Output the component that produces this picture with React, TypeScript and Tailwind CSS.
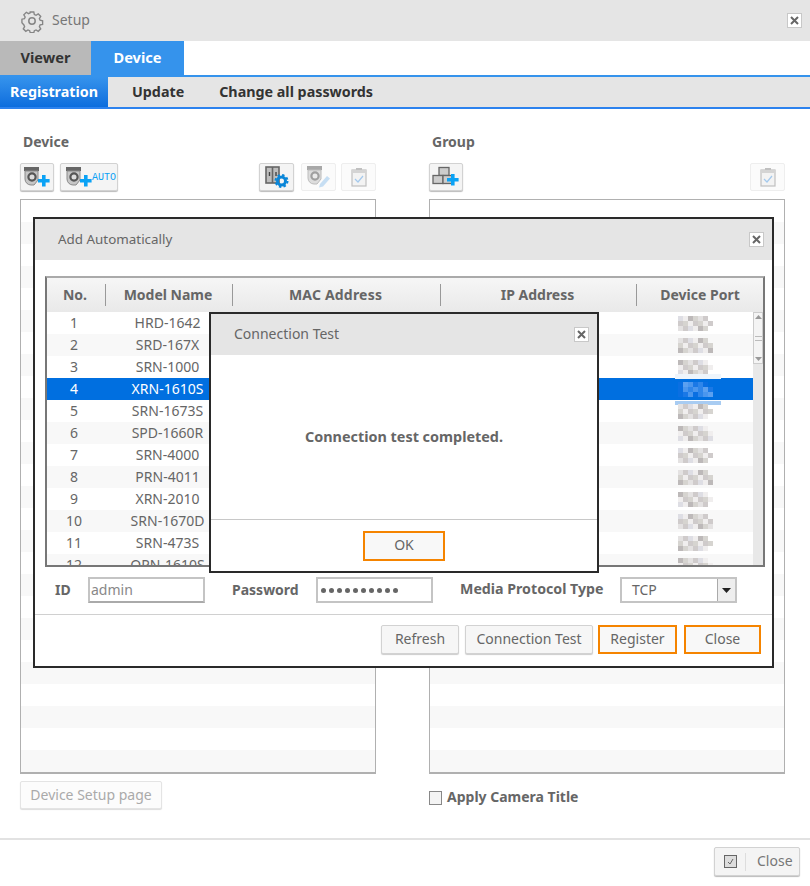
import { ReactNode } from "react";

const devices = [
  ["1", "HRD-1642"],
  ["2", "SRD-167X"],
  ["3", "SRN-1000"],
  ["4", "XRN-1610S"],
  ["5", "SRN-1673S"],
  ["6", "SPD-1660R"],
  ["7", "SRN-4000"],
  ["8", "PRN-4011"],
  ["9", "XRN-2010"],
  ["10", "SRN-1670D"],
  ["11", "SRN-473S"],
  ["12", "QPN-1610S"],
];

const backRows = Array.from({ length: 26 }, (_, i) => i);

// pixel mosaic standing in for the blurred port numbers
function Mosaic({ seed, selected }: { seed: number; selected: boolean }) {
  const shades = selected
    ? ["#2f86ea", "#5ba0f0", "#1a78e6", "#0a6fe2", "#4a96ee"]
    : ["#e4e2e2", "#cfcbcb", "#dedee4", "#f0eeee", "#bdb9b9", "#d6d4d0"];
  const cells = [];
  for (let y = 0; y < 3; y++) {
    for (let x = 0; x < 7; x++) {
      const n = (seed * 7 + x * 13 + y * 5 + ((x * y + seed) % 4) * 3) % shades.length;
      const empty = (y === 0 && x === 6) || (y === 2 && x === 6 && seed % 2 === 0);
      if (!empty) cells.push(<rect key={`${x}-${y}`} x={x * 5} y={y * 5} width="5" height="5" fill={shades[n]} />);
    }
  }
  return (
    <svg width="35" height="15" className="block overflow-visible">
      {selected && <rect x="-3" y="-8" width="46" height="5" fill="#eef5fc" />}
      {selected && <rect x="-3" y="19" width="46" height="4" fill="#a8ccf2" />}
      {cells}
    </svg>
  );
}

function IconButton({ children, className, disabled }: { children: ReactNode; className: string; disabled?: boolean }) {
  return (
    <div
      className={`flex h-[28px] items-center justify-center rounded-[2px] border shadow-[0_1px_1px_#bbb] ${
        disabled ? "border-[#eee] bg-[#fbfbfb] shadow-none" : "border-[#d2d2d2] bg-[#f4f4f4]"
      } ${className}`}
    >
      {children}
    </div>
  );
}

function Plus({ x, y }: { x: number; y: number }) {
  return <path d={`M${x + 4} ${y}h3.6v4h4v3.6h-4v4h-3.6v-4h-4v-3.6h4z`} fill="#0aa2f5" />;
}

function CamBody() {
  return (
    <>
      <rect x="0" y="0" width="15" height="4" fill="#666" />
      <path d="M1 4h13v9l-4 5h-3a6 6 0 0 1-6-6z" fill="#c6c6c6" stroke="#8a8a8a" strokeWidth="1" />
      <circle cx="8" cy="10" r="3.6" fill="#ddd" stroke="#555" strokeWidth="2.2" />
    </>
  );
}

function CamAdd() {
  return (
    <svg width="26" height="20" viewBox="0 0 26 20">
      <CamBody />
      <Plus x={14} y={8} />
    </svg>
  );
}

function BlockSettings() {
  return (
    <svg width="24" height="22" viewBox="0 0 24 22">
      <rect x="1" y="1" width="13" height="16" fill="#bdbdbd" stroke="#666" strokeWidth="1.6" />
      <path d="M7.5 1v16" stroke="#666" strokeWidth="1.6" />
      <path d="M4.5 6v4M11 6v4" stroke="#444" strokeWidth="1.4" />
      <circle cx="16.5" cy="15" r="4" fill="none" stroke="#0a86d8" strokeWidth="3" />
      <circle cx="16.5" cy="15" r="6" fill="none" stroke="#0a86d8" strokeWidth="2" strokeDasharray="2.4 2.3" />
    </svg>
  );
}

function CamEdit() {
  return (
    <svg width="24" height="22" viewBox="0 0 24 22" opacity="0.55">
      <CamBody />
      <path d="M13 18l7-8l3 2.5l-7 8l-4 1z" fill="#9cc8ee" />
    </svg>
  );
}

function Clipboard() {
  return (
    <svg width="16" height="20" viewBox="0 0 16 20" opacity="0.6">
      <rect x="1" y="3" width="14" height="16" fill="#eee" stroke="#999" strokeWidth="1.2" />
      <rect x="1" y="3" width="14" height="3" fill="#bbb" />
      <rect x="5" y="1" width="6" height="2" fill="#999" />
      <path d="M4 12l3 3l5-6" fill="none" stroke="#6aa8e4" strokeWidth="1.2" />
    </svg>
  );
}

function GroupAdd() {
  return (
    <svg width="28" height="22" viewBox="0 0 28 22">
      <rect x="7" y="1.5" width="10" height="8" fill="#ccc" stroke="#666" strokeWidth="1.3" />
      <rect x="1" y="9.5" width="10" height="8" fill="#ccc" stroke="#666" strokeWidth="1.3" />
      <rect x="11" y="9.5" width="10" height="8" fill="#ccc" stroke="#666" strokeWidth="1.3" />
      <Plus x={15} y={8} />
    </svg>
  );
}

function CloseBox() {
  return (
    <div className="flex h-[15px] w-[15px] items-center justify-center border border-[#c8c8c8] bg-white">
      <svg width="9" height="9" viewBox="0 0 9 9">
        <path d="M1 1l7 7M8 1l-7 7" stroke="#666" strokeWidth="2" />
      </svg>
    </div>
  );
}

function Gear() {
  return (
    <svg width="24" height="24" viewBox="0 0 24 24" fill="none" stroke="#858585" strokeWidth="1.5">
      <path d="M10 2h4l.6 2.8 1.9.8 2.4-1.5 2.8 2.8-1.5 2.4.8 1.9 2.8.6v4l-2.8.6-.8 1.9 1.5 2.4-2.8 2.8-2.4-1.5-1.9.8-.6 2.2h-4l-.6-2.2-1.9-.8-2.4 1.5-2.8-2.8 1.5-2.4-.8-1.9L.8 14v-4l2.8-.6.8-1.9-1.5-2.4 2.8-2.8 2.4 1.5 1.9-.8z" transform="translate(1.2 1.2) scale(0.9)" />
      <circle cx="12" cy="12" r="3.2" />
    </svg>
  );
}

function ModalButton({ label, className, orange }: { label: string; className: string; orange?: boolean }) {
  return (
    <div
      className={`flex h-[29px] items-center justify-center pb-[2px] text-[14px] text-[#666] ${
        orange ? "border-2 border-[#f58400] bg-[#f8f8f8]" : "rounded-[2px] border border-[#d2d2d2] bg-[#f6f6f6] shadow-[0_1px_1px_#ccc]"
      } ${className}`}
    >
      {label}
    </div>
  );
}

function BackPanel() {
  return (
    <div className="h-[575px] overflow-hidden border border-b-2 border-[#b0b0b0] bg-white">
      {backRows.map((i) => (
        <div key={i} className={`h-[22px] ${i % 2 === 1 ? "bg-[#f8f8f8]" : "bg-white"}`} />
      ))}
    </div>
  );
}

function AddAutomatically() {
  return (
    <div className="absolute left-[33px] top-[217px] flex h-[451px] w-[741px] flex-col border-2 border-[#2a2a2a] bg-white">
      <div className="flex h-[41px] shrink-0 items-center justify-between bg-[#e5e5e5] pl-[23px] pr-[8px]">
        <span className="text-[13.4px] text-[#666]">Add Automatically</span>
        <CloseBox />
      </div>
      <div className="ml-[10px] mt-[16px] flex h-[291px] w-[720px] flex-col overflow-hidden border-2 border-[#777] border-t-[#aaa]">
        <div className="flex h-[34px] shrink-0 items-center bg-gradient-to-b from-[#f6f6f6] to-[#e9e9e9] text-[14px] font-bold text-[#666]">
          <div className="w-[56px] pb-[2px] text-center">No.</div>
          <div className="ml-[2px] h-[22px] w-px bg-[#999]" />
          <div className="w-[124px] pb-[2px] text-center">Model Name</div>
          <div className="ml-[2px] h-[22px] w-px bg-[#999]" />
          <div className="w-[205px] pb-[2px] text-center tracking-[0.2px]">MAC Address</div>
          <div className="ml-[2px] h-[22px] w-px bg-[#999]" />
          <div className="w-[193px] pb-[2px] text-center">IP Address</div>
          <div className="ml-[2px] h-[22px] w-px bg-[#999]" />
          <div className="flex-1 pb-[2px] text-center">Device Port</div>
        </div>
        <div className="flex min-h-0 flex-1 overflow-hidden">
          <div className="min-w-0 flex-1">
            {devices.map(([no, model], i) => {
              const selected = i === 3;
              return (
                <div
                  key={no}
                  className={`flex h-[22px] items-center text-[14px] ${
                    selected ? "bg-[#006fe0] text-white" : i % 2 === 1 ? "bg-[#f8f8f8] text-[#666]" : "bg-white text-[#666]"
                  }`}
                >
                  <div className="w-[54px] pb-[2px] text-center">{no}</div>
                  <div className="ml-[1px] w-[131px] pb-[2px] text-center">{model}</div>
                  <div className="w-[404px]" />
                  <div className="relative ml-[41px]">
                    <Mosaic seed={i + 2} selected={selected} />
                  </div>
                </div>
              );
            })}
          </div>
          <div className="flex w-[10px] shrink-0 flex-col bg-[#e8e8e8]">
            <div className="flex h-[52px] flex-col items-center justify-between border border-[#ccc] bg-[#f4f4f4] py-[2px]">
              <svg width="7" height="4" viewBox="0 0 7 4"><path d="M3.5 0l3.5 4h-7z" fill="#999" /></svg>
              <div className="h-[5px] w-[7px] border-y border-[#bbb]" />
              <svg width="7" height="4" viewBox="0 0 7 4"><path d="M3.5 4l3.5-4h-7z" fill="#999" /></svg>
            </div>
          </div>
        </div>
      </div>
      <div className="mt-[10px] flex h-[26px] items-center text-[14px] text-[#666]">
        <span className="ml-[20px] w-[33px] pb-[2px] font-bold">ID</span>
        <div className="flex h-[26px] w-[117px] items-center border-2 border-[#c4c4c4] border-b-[#aaa] pb-[2px] pl-[1px] text-[#888]">admin</div>
        <span className="ml-[27px] w-[84px] pb-[2px] font-bold">Password</span>
        <div className="flex h-[26px] w-[117px] items-center gap-[3px] border-2 border-[#c4c4c4] pl-[3px]">
          {Array.from({ length: 10 }, (_, i) => (
            <span key={i} className="h-[5px] w-[5px] rounded-full bg-[#666]" />
          ))}
        </div>
        <span className="ml-[27px] w-[160px] pb-[2px] text-[14.2px] font-bold">Media Protocol Type</span>
        <div className="flex h-[26px] w-[117px] border-2 border-[#c4c4c4]">
          <div className="flex flex-1 items-center pb-[2px] pl-[10px]">TCP</div>
          <div className="flex w-[18px] items-center justify-center border-l border-[#aaa] bg-[#eee]">
            <svg width="9" height="5" viewBox="0 0 9 5"><path d="M0 0h9l-4.5 5z" fill="#222" /></svg>
          </div>
        </div>
      </div>
      <div className="mt-[11px] h-px bg-[#d0d0d0]" />
      <div className="mt-[10px] flex items-center pl-[346px]">
        <ModalButton label="Refresh" className="w-[78px]" />
        <ModalButton label="Connection Test" className="ml-[6px] w-[128px]" />
        <ModalButton label="Register" orange className="ml-[5px] w-[79px]" />
        <ModalButton label="Close" orange className="ml-[7px] w-[77px]" />
      </div>
    </div>
  );
}

function ConnectionTest() {
  return (
    <div className="absolute left-[209px] top-[312px] flex h-[261px] w-[390px] flex-col border-2 border-[#2a2a2a] bg-white">
      <div className="flex h-[41px] shrink-0 items-center justify-between bg-[#e5e5e5] pl-[23px] pr-[8px]">
        <span className="pb-[2px] text-[14px] text-[#666]">Connection Test</span>
        <CloseBox />
      </div>
      <div className="flex h-[164px] items-center justify-center text-[14.4px] font-bold text-[#666]">Connection test completed.</div>
      <div className="h-px bg-[#c8c8c8]" />
      <div className="flex flex-1 items-center justify-center">
        <ModalButton label="OK" orange className="h-[30px] w-[82px] pb-0" />
      </div>
    </div>
  );
}

export default function App() {
  return (
    <div className="relative h-[886px] w-[810px] overflow-hidden bg-white font-['Noto_Sans',sans-serif]">
      <header className="flex h-[41px] items-center justify-between bg-[#e5e5e5] pl-[20px] pr-[8px]">
        <div className="flex items-center gap-[8px]">
          <Gear />
          <span className="pb-[2px] text-[14px] text-[#777]">Setup</span>
        </div>
        <CloseBox />
      </header>
      <div className="flex h-[34px] text-[14.6px] font-bold">
        <div className="flex w-[91px] items-center justify-center bg-[#b9b9b9] text-[#333]">Viewer</div>
        <div className="flex w-[93px] items-center justify-center bg-[#3593ec] text-white">Device</div>
      </div>
      <nav className="flex h-[34px] items-stretch border-y-2 border-t-[#3593ec] border-b-[#2d82ee] bg-[#e5e5e5] text-[14.3px] font-bold text-[#333]">
        <div className="flex w-[108px] items-center justify-center bg-gradient-to-b from-[#3593ec] to-[#0c6ddd] text-white">Registration</div>
        <div className="ml-[24px] flex items-center">Update</div>
        <div className="ml-[35px] flex items-center">Change all passwords</div>
      </nav>
      <main className="flex gap-[53px] px-[20px]">
        <section className="w-[356px]">
          <h2 className="mt-[23px] h-[21px] pl-[3px] text-[14px] font-bold leading-[20px] text-[#666]">Device</h2>
          <div className="mt-[10px] flex">
            <IconButton className="w-[34px]"><CamAdd /></IconButton>
            <IconButton className="ml-[6px] w-[58px] justify-start pl-[5px]">
              <CamAdd />
              <span className="font-['Liberation_Mono',monospace] text-[10px] text-[#0aa2f5]">AUTO</span>
            </IconButton>
            <IconButton className="ml-[141px] w-[35px]"><BlockSettings /></IconButton>
            <IconButton disabled className="ml-[7px] w-[35px]"><CamEdit /></IconButton>
            <IconButton disabled className="ml-[5px] w-[35px]"><Clipboard /></IconButton>
          </div>
          <div className="mt-[8px]"><BackPanel /></div>
          <div className="mt-[7px] flex h-[28px] w-[142px] items-center justify-center rounded-[2px] border border-[#e4e4e4] bg-[#fcfcfc] pb-[2px] text-[14px] text-[#aaa] shadow-[0_1px_1px_#ddd]">Device Setup page</div>
        </section>
        <section className="w-[356px]">
          <h2 className="mt-[23px] h-[21px] pl-[3px] text-[14px] font-bold leading-[20px] text-[#666]">Group</h2>
          <div className="mt-[10px] flex justify-between">
            <IconButton className="w-[34px]"><GroupAdd /></IconButton>
            <IconButton disabled className="w-[35px]"><Clipboard /></IconButton>
          </div>
          <div className="mt-[8px]"><BackPanel /></div>
          <div className="mt-[12px] flex items-center">
            <div className="h-[14px] w-[13px] border border-[#888] bg-[#f4f4f4]" />
            <span className="ml-[5px] pb-[2px] text-[14px] font-bold text-[#666]">Apply Camera Title</span>
          </div>
        </section>
      </main>
      <footer className="absolute inset-x-0 bottom-0 flex h-[48px] justify-end border-t-2 border-[#e2e2e2] pr-[10px] pt-[7px]">
        <div className="flex h-[29px] w-[86px] items-center rounded-[2px] border border-[#d2d2d2] bg-[#f4f4f4] pl-[9px] text-[14px] text-[#777] shadow-[0_1px_1px_#bbb]">
          <div className="flex h-[13px] w-[13px] items-center justify-center border border-[#666] bg-[#ddd]">
            <svg width="7" height="7" viewBox="0 0 7 7"><path d="M1 4l2 2l3-5" fill="none" stroke="#666" /></svg>
          </div>
          <div className="ml-[8px] h-[18px] w-px bg-[#ddd]" />
          <span className="ml-[11px] pb-[2px]">Close</span>
        </div>
      </footer>
      <AddAutomatically />
      <ConnectionTest />
    </div>
  );
}
